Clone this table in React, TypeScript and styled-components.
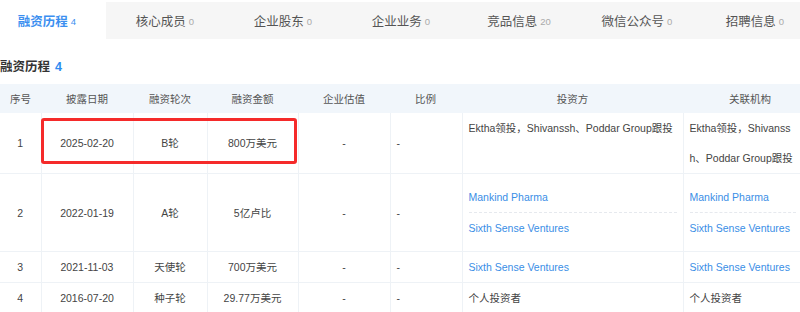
import styled, { createGlobalStyle } from 'styled-components'

const GlobalStyle = createGlobalStyle`
  html, body {
    margin: 0;
    padding: 0;
    background: #ffffff;
  }
  body {
    font-family: 'Liberation Sans', 'Noto Sans CJK SC', sans-serif;
    color: #444;
  }
`

type Tab = { label: string; count: number }

const tabs: Tab[] = [
  { label: '融资历程', count: 4 },
  { label: '核心成员', count: 0 },
  { label: '企业股东', count: 0 },
  { label: '企业业务', count: 0 },
  { label: '竞品信息', count: 20 },
  { label: '微信公众号', count: 0 },
  { label: '招聘信息', count: 0 },
]

type Round = {
  no: number
  date: string
  round: string
  amount: string
  investors: string[]
  linked: boolean
}

const rounds: Round[] = [
  {
    no: 1,
    date: '2025-02-20',
    round: 'B轮',
    amount: '800万美元',
    investors: ['Ektha领投，Shivanssh、Poddar Group跟投'],
    linked: false,
  },
  {
    no: 2,
    date: '2022-01-19',
    round: 'A轮',
    amount: '5亿卢比',
    investors: ['Mankind Pharma', 'Sixth Sense Ventures'],
    linked: true,
  },
  {
    no: 3,
    date: '2021-11-03',
    round: '天使轮',
    amount: '700万美元',
    investors: ['Sixth Sense Ventures'],
    linked: true,
  },
  {
    no: 4,
    date: '2016-07-20',
    round: '种子轮',
    amount: '29.77万美元',
    investors: ['个人投资者'],
    linked: false,
  },
]

const columns = [
  { title: '序号', width: 41 },
  { title: '披露日期', width: 92 },
  { title: '融资轮次', width: 74 },
  { title: '融资金额', width: 91 },
  { title: '企业估值', width: 92 },
  { title: '比例', width: 72, left: true },
  { title: '投资方', width: 221 },
  { title: '关联机构', width: 134 },
]

export default function App() {
  return (
    <Page>
      <GlobalStyle />
      <TabBar>
        {tabs.map((t, i) => (
          <TabItem key={t.label} $active={i === 0}>
            {t.label}
            <TabCount $active={i === 0}>{t.count}</TabCount>
          </TabItem>
        ))}
      </TabBar>

      <Title>
        融资历程<TitleCount>4</TitleCount>
      </Title>

      <TableWrap>
        <Table>
          <colgroup>
            {columns.map((c) => (
              <col key={c.title} style={{ width: c.width }} />
            ))}
          </colgroup>
          <thead>
            <tr>
              {columns.map((c) => (
                <Th key={c.title} $left={c.left}>
                  {c.title}
                </Th>
              ))}
            </tr>
          </thead>
          <tbody>
            {rounds.map((r) => (
              <tr key={r.no}>
                <Td>{r.no}</Td>
                <Td>{r.date}</Td>
                <Td>{r.round}</Td>
                <Td>{r.amount}</Td>
                <Td>-</Td>
                <Td $left>-</Td>
                <PartyCell $multi={r.investors.length > 1}>
                  {r.investors.map((name) => (
                    <Party key={name} $link={r.linked}>
                      {name}
                    </Party>
                  ))}
                </PartyCell>
                <PartyCell $multi={r.investors.length > 1}>
                  {r.investors.map((name) => (
                    <Party key={name} $link={r.linked} $narrow>
                      {name}
                    </Party>
                  ))}
                </PartyCell>
              </tr>
            ))}
          </tbody>
        </Table>
        <Highlight />
      </TableWrap>
    </Page>
  )
}

const Page = styled.div`
  width: 800px;
  height: 312px;
  overflow: hidden;
  background: #fff;
`

const TabBar = styled.div`
  display: flex;
  margin: 2px 0 0 -12px;
  height: 37px;
  background: #f6f6f6;
`

const TabItem = styled.div<{ $active?: boolean }>`
  flex: 0 0 118px;
  display: flex;
  align-items: center;
  justify-content: center;
  gap: 3px;
  font-size: 12.5px;
  font-weight: ${(p) => (p.$active ? 700 : 400)};
  color: ${(p) => (p.$active ? '#3b8ff0' : '#555')};
  background: ${(p) => (p.$active ? '#fff' : 'transparent')};
`

const TabCount = styled.span<{ $active?: boolean }>`
  font-size: 9.5px;
  font-weight: 400;
  color: ${(p) => (p.$active ? '#3b8ff0' : '#aaa')};
  margin-top: 1px;
`

const Title = styled.div`
  padding: 20px 0 9px;
  line-height: 16px;
  font-size: 12.5px;
  font-weight: 700;
  color: #333;
`

const TitleCount = styled.span`
  margin-left: 5px;
  color: #2e8bf0;
`

const TableWrap = styled.div`
  position: relative;
`

const Table = styled.table`
  table-layout: fixed;
  border-collapse: collapse;
  width: 817px;
  font-size: 10.5px;
`

const Th = styled.th<{ $left?: boolean }>`
  height: 29px;
  padding: 0 ${(p) => (p.$left ? '0 0 25px' : '0')};
  background: #f1f6fb;
  color: #555;
  font-weight: 400;
  text-align: ${(p) => (p.$left ? 'left' : 'center')};
`

const Td = styled.td<{ $left?: boolean }>`
  padding: 0 ${(p) => (p.$left ? '6px' : '0')};
  text-align: ${(p) => (p.$left ? 'left' : 'center')};
  vertical-align: middle;
  line-height: 30px;
  color: #444;
  border-right: 1px solid #eef2f6;
  border-bottom: 1px solid #eef2f6;
`

const PartyCell = styled.td<{ $multi?: boolean }>`
  padding: ${(p) => (p.$multi ? '8px 6px' : '0 6px')};
  vertical-align: top;
  text-align: left;
  border-right: 1px solid #eef2f6;
  border-bottom: 1px solid #eef2f6;
`

const Party = styled.div<{ $link?: boolean; $narrow?: boolean }>`
  line-height: 30px;
  color: ${(p) => (p.$link ? '#3a8ee6' : '#444')};
  max-width: ${(p) => (p.$narrow ? '106px' : 'none')};
  word-break: break-all;

  & + & {
    border-top: 1px dashed #e6e9ee;
  }
`

const Highlight = styled.div`
  position: absolute;
  left: 41px;
  top: 34px;
  width: 256px;
  height: 46px;
  box-sizing: border-box;
  border: 3px solid #f52a2a;
  border-radius: 3px;
  pointer-events: none;
`
